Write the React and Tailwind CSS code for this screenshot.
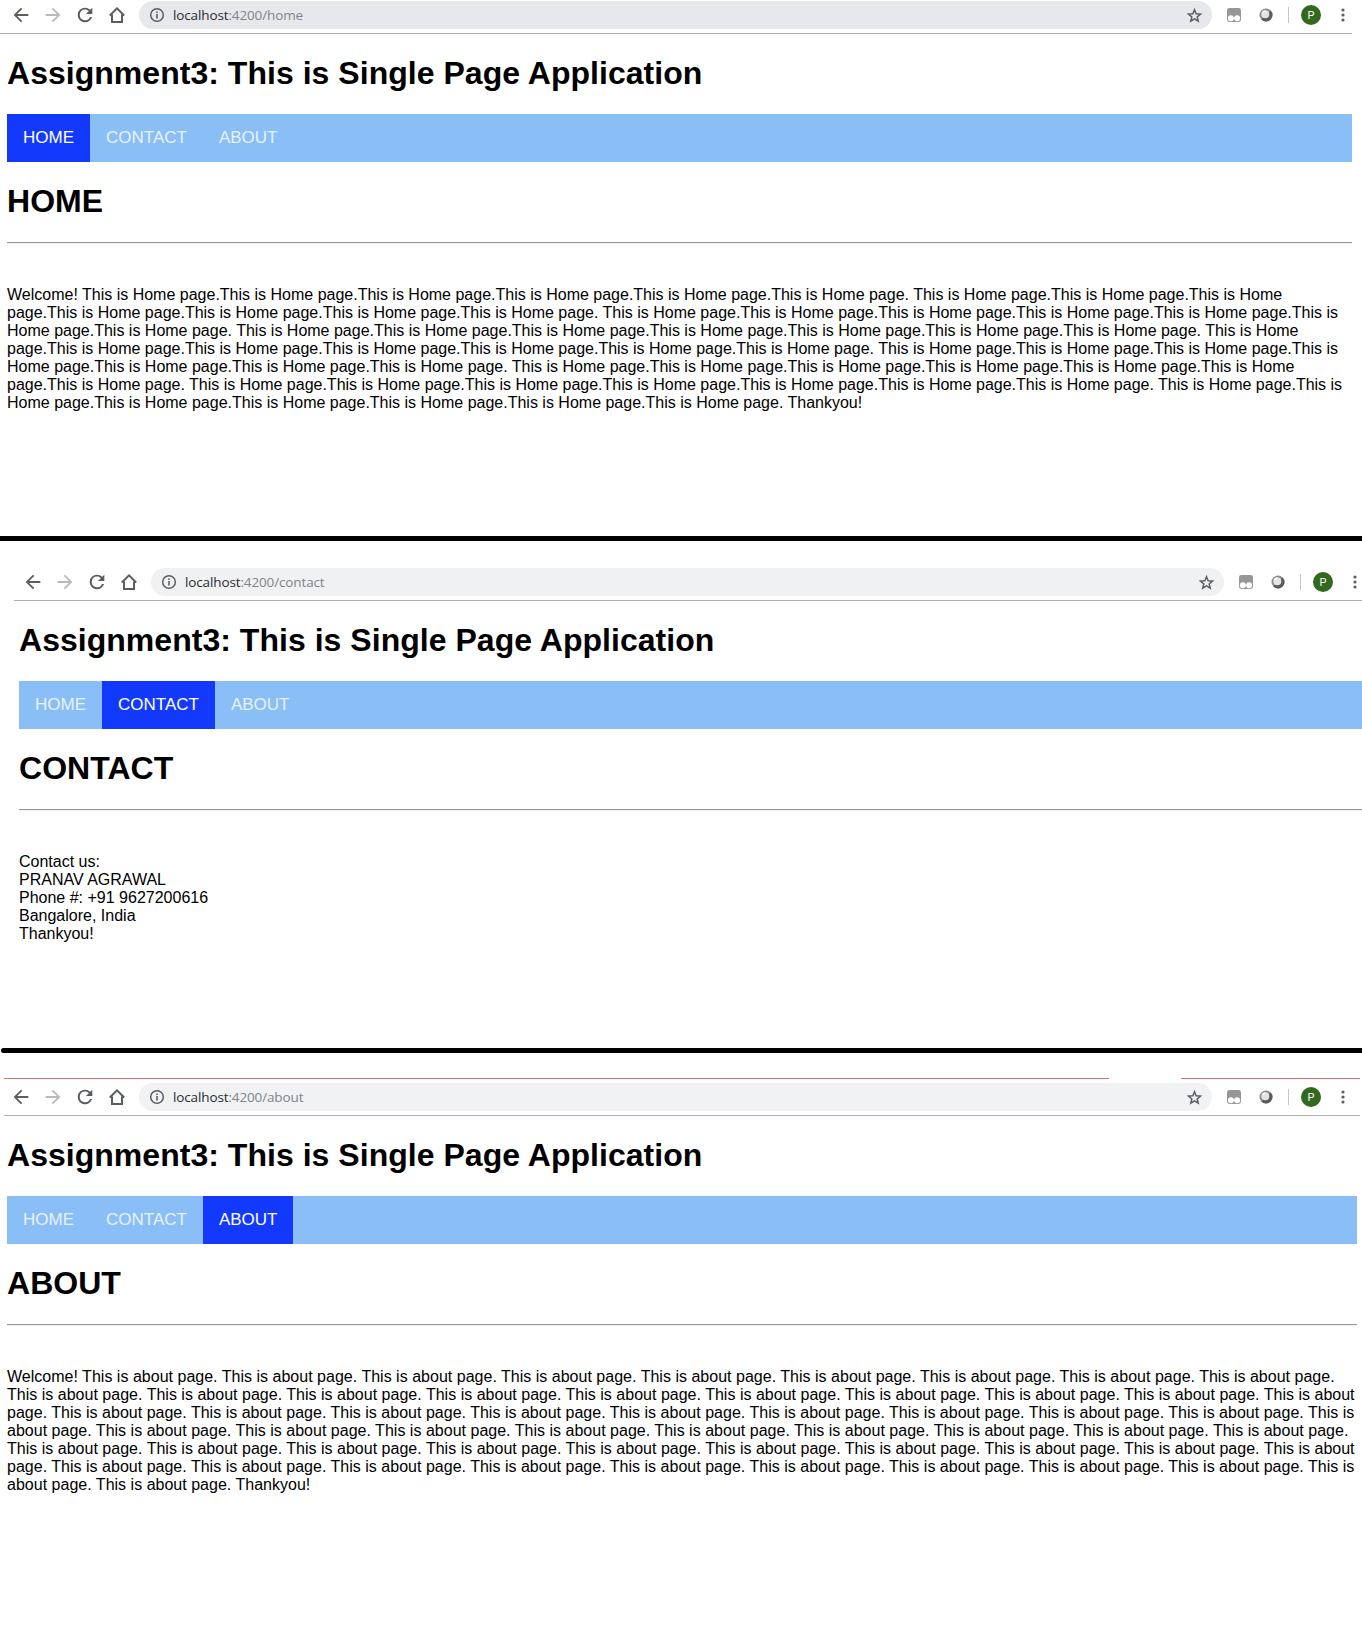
import React from "react";

const HOME_UNIT = "This is Home page.";
const HOME_TEXT =
  "Welcome! " +
  [6, 7, 7, 7, 7, 7, 7, 7, 7].map((n) => HOME_UNIT.repeat(n)).join(" ") +
  " Thankyou!";
const ABOUT_TEXT = "Welcome! " + "This is about page. ".repeat(59) + "Thankyou!";

function Icon({ d, className }) {
  return (
    <svg viewBox="0 0 24 24" className={className} fill="currentColor">
      <path d={d} />
    </svg>
  );
}

const BACK = "M20 10.8H7.83l5.59-5.39L12 4l-8 8 8 8 1.41-1.41L7.83 13.2H20z";
const FORWARD = "M4 10.8h12.17l-5.59-5.39L12 4l8 8-8 8-1.41-1.41 5.58-5.39H4z";
const RELOAD =
  "M17.65 6.35A7.96 7.96 0 0 0 12 4a8 8 0 1 0 7.73 10.2h-2.3A5.8 5.8 0 1 1 12 6.1c1.66 0 3.1.69 4.15 1.75L13 11h7V4z";

function Toolbar({ path, pill }) {
  return (
    <div className="flex h-[28px] w-[1350px] shrink-0 items-center text-[#5a5d61]">
      <Icon d={BACK} className="ml-[10px] h-[22px] w-[22px] shrink-0" />
      <Icon d={FORWARD} className="ml-[10px] h-[22px] w-[22px] shrink-0 text-[#b9babc]" />
      <Icon d={RELOAD} className="ml-[10px] h-[22px] w-[22px] shrink-0" />
      <svg viewBox="0 0 18 18" className="ml-[12px] h-[18px] w-[18px] shrink-0" fill="none" stroke="currentColor" strokeWidth="2">
        <path d="M1.8 9.5 9 2.3l7.2 7.2M4 8.5V16h10V8.5" />
      </svg>
      <div className={`ml-[13px] flex h-[28px] w-[1073px] shrink-0 items-center rounded-full ${pill}`}>
        <svg viewBox="0 0 16 16" className="ml-[10px] h-[16px] w-[16px]" fill="none" stroke="currentColor" strokeWidth="1.5">
          <circle cx="8" cy="8" r="6.3" />
          <path d="M8 7v4.4M8 4.5v1.5" strokeWidth="1.6" />
        </svg>
        <span className="ml-[8px] whitespace-nowrap font-['Open_Sans',sans-serif] text-[13.5px] leading-[20px] tracking-[-0.13px] text-[#808488]">
          <span className="text-[#2a2c30]">localhost</span>:4200{path}
        </span>
        <svg viewBox="0 0 24 24" className="ml-auto mr-[9px] h-[17px] w-[17px]" fill="none" stroke="currentColor" strokeWidth="2.1">
          <path d="m12 3.8 2.3 5.7 6.2.5-4.7 4 1.5 6.1L12 16.9l-5.3 3.2 1.5-6.1-4.7-4 6.2-.5z" />
        </svg>
      </div>
      <svg viewBox="0 0 14 14" className="ml-[15px] h-[14px] w-[14px] shrink-0">
        <path d="M2.4 0h9.2A2.4 2.4 0 0 1 14 2.4v9.2a2.4 2.4 0 0 1-2.4 2.4H2.4A2.4 2.4 0 0 1 0 11.6V2.4A2.4 2.4 0 0 1 2.4 0z" fill="#969696" />
        <circle cx="3.9" cy="10.3" r="3" fill="#fff" />
        <circle cx="10.1" cy="10.3" r="3" fill="#fff" />
      </svg>
      <svg viewBox="0 0 14 14" className="ml-[18px] h-[14px] w-[14px] shrink-0">
        <circle cx="7" cy="7" r="6.5" fill="#8a8a8a" />
        <path d="M11.6 2.4A6.5 6.5 0 0 1 2.4 11.6z" fill="#5a5a5a" />
        <circle cx="6.3" cy="6.3" r="4" fill="#e4e4e4" />
        <path d="M3.8 4.8a3 3 0 0 1 2.4-1.7" stroke="#fff" strokeWidth="1.5" fill="none" />
      </svg>
      <div className="ml-[15px] h-[16px] w-px shrink-0 bg-[#c4c6c9]" />
      <div className="ml-[12px] flex h-[20px] w-[20px] shrink-0 items-center justify-center rounded-full bg-[#33691e] font-[Roboto,sans-serif] text-[11px] leading-none text-white">
        P
      </div>
      <svg viewBox="0 0 4 14" className="ml-[20px] h-[14px] w-[4px] shrink-0" fill="currentColor">
        <circle cx="2" cy="2" r="1.6" />
        <circle cx="2" cy="7" r="1.6" />
        <circle cx="2" cy="12" r="1.6" />
      </svg>
    </div>
  );
}

function Page({ active, width, children }) {
  return (
    <div className={`flex flex-col pl-[7px] ${width}`}>
      <h1 className="mt-[21px] h-[37px] whitespace-nowrap text-[32px] font-bold leading-[36px] tracking-[0.03px]">
        Assignment3: This is Single Page Application
      </h1>
      <nav className="mt-[22px] flex h-[48px] bg-[#8abef7]">
        {["HOME", "CONTACT", "ABOUT"].map((item) => (
          <a
            key={item}
            className={`px-[16px] pt-[14px] text-[17px] leading-[20px] ${
              item === active ? "bg-[#133afc] text-white" : "text-[#e8f2fd]"
            }`}
          >
            {item}
          </a>
        ))}
      </nav>
      <h1 className="mt-[21px] h-[37px] text-[32px] font-bold leading-[36px] tracking-[0.03px]">{active}</h1>
      <div className="mt-[22px] h-px bg-[#979797]" />
      <div className="h-px bg-[#f0f0f0]" />
      <div className="mt-[42px] text-[16px] leading-[18px]">{children}</div>
    </div>
  );
}

export default function App() {
  return (
    <div className="flex h-[1642px] w-[1362px] flex-col overflow-hidden bg-white font-['Liberation_Sans',Arial,sans-serif] text-black">
      <section className="flex h-[536px] shrink-0 flex-col pt-px">
        <Toolbar path="/home" pill="bg-[#e7e8ec]" />
        <div className="mt-[4px] h-px w-[1352px] shrink-0 bg-[#b0aeb0]" />
        <Page active="HOME" width="w-[1352px]">{HOME_TEXT}</Page>
      </section>
      <div className="h-[5px] shrink-0 bg-black" />
      <section className="flex h-[507px] shrink-0 flex-col overflow-hidden pl-[12px] pt-[27px]">
        <Toolbar path="/contact" pill="bg-[#f0f1f3]" />
        <div className="ml-[2px] mt-[4px] h-px shrink-0 bg-[#b0aeb0]" />
        <Page active="CONTACT" width="w-[1350px]">
          <p>Contact us:</p>
          <p>PRANAV AGRAWAL</p>
          <p>Phone #: +91 9627200616</p>
          <p>Bangalore, India</p>
          <p>Thankyou!</p>
        </Page>
      </section>
      <div className="ml-px h-[5px] shrink-0 rounded-l-full bg-black" />
      <section className="flex shrink-0 flex-col pt-[25px]">
        <div className="ml-[4px] flex h-px w-[1356px] justify-between">
          <div className="w-[1105px] bg-[#d47476]" />
          <div className="w-[179px] bg-[#d47476]" />
        </div>
        <div className="h-[4px]" />
        <Toolbar path="/about" pill="bg-[#f1f2f4]" />
        <div className="ml-[4px] mt-[4px] h-px w-[1356px] bg-[#b0aeb0]" />
        <Page active="ABOUT" width="w-[1357px]">
          <p className="tracking-[0.014px]">{ABOUT_TEXT}</p>
        </Page>
      </section>
    </div>
  );
}
